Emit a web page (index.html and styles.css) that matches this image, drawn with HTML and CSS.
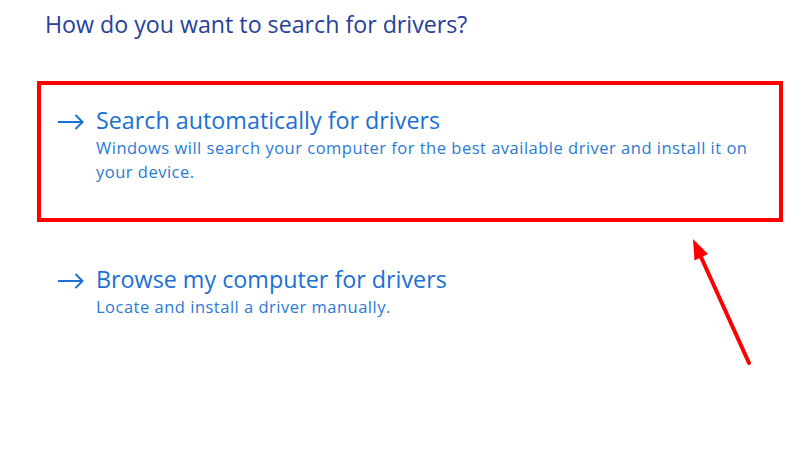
FILE: index.html
```html
<!DOCTYPE html>
<html lang="en">
<head>
  <meta charset="UTF-8" />
  <title>Update Drivers</title>
  <link rel="stylesheet" href="styles.css">
</head>
<body>
  <div id="page">
    <h1 class="title">How do you want to search for drivers?</h1>

    <div class="option highlight">
      <div class="option-head">
        <svg class="arrow" width="27" height="16" viewBox="0 0 27 16">
          <path d="M1 8H25.5M18.5 1L25.5 8L18.5 15" fill="none" stroke="#1c70d3" stroke-width="2"/>
        </svg>
        <span class="option-title">Search automatically for drivers</span>
      </div>
      <p class="option-desc">Windows will search your computer for the best available driver and install it on your device.</p>
    </div>

    <div class="option second">
      <div class="option-head">
        <svg class="arrow" width="27" height="16" viewBox="0 0 27 16">
          <path d="M1 8H25.5M18.5 1L25.5 8L18.5 15" fill="none" stroke="#1c70d3" stroke-width="2"/>
        </svg>
        <span class="option-title">Browse my computer for drivers</span>
      </div>
      <p class="option-desc">Locate and install a driver manually.</p>
    </div>

    <!-- annotation arrow pointing at the box -->
    <svg class="pointer" width="80" height="140" viewBox="0 0 80 140">
      <line x1="69" y1="133" x2="21" y2="27" stroke="#ff0000" stroke-width="4" stroke-linecap="round"/>
      <polygon points="13,9 28,24 14.5,30.5" fill="#ff0000"/>
    </svg>
  </div>
</body>
</html>
```

FILE: styles.css
```css
body {
  margin: 0;
  background: #fff;
  font-family: "Open Sans", "Noto Sans", sans-serif;
}

#page {
  position: relative;
  width: 804px;
  height: 453px;
  padding: 9px 0 0 37px;
  box-sizing: border-box;
}

.title {
  margin: 0 0 0 8px;
  font-size: 23.2px;
  font-weight: normal;
  line-height: 30px;
  color: #26409a;
}

.option {
  width: 746px;
  box-sizing: border-box;
  border: 4px solid transparent;
  padding: 0 20px 0 16px;
}

.highlight {
  margin-top: 42px;
  height: 141px;
  border-color: #ff0000;
  padding-top: 21px;
}

.second {
  margin-top: 39px;
}

.option-head {
  display: flex;
  align-items: flex-start;
  gap: 12px;
  color: #1c70d3;
}

.arrow {
  flex: none;
  margin-top: 8px;
}

.option-title {
  font-size: 23.3px;
  line-height: 28px;
}

.option-desc {
  max-width: 672px;
  margin: 2px 0 0 39px;
  font-size: 16.5px;
  letter-spacing: 0.5px;
  line-height: 24px;
  color: #2a7ad5;
}

.pointer {
  position: absolute;
  left: 680px;
  top: 230px;
}
```
